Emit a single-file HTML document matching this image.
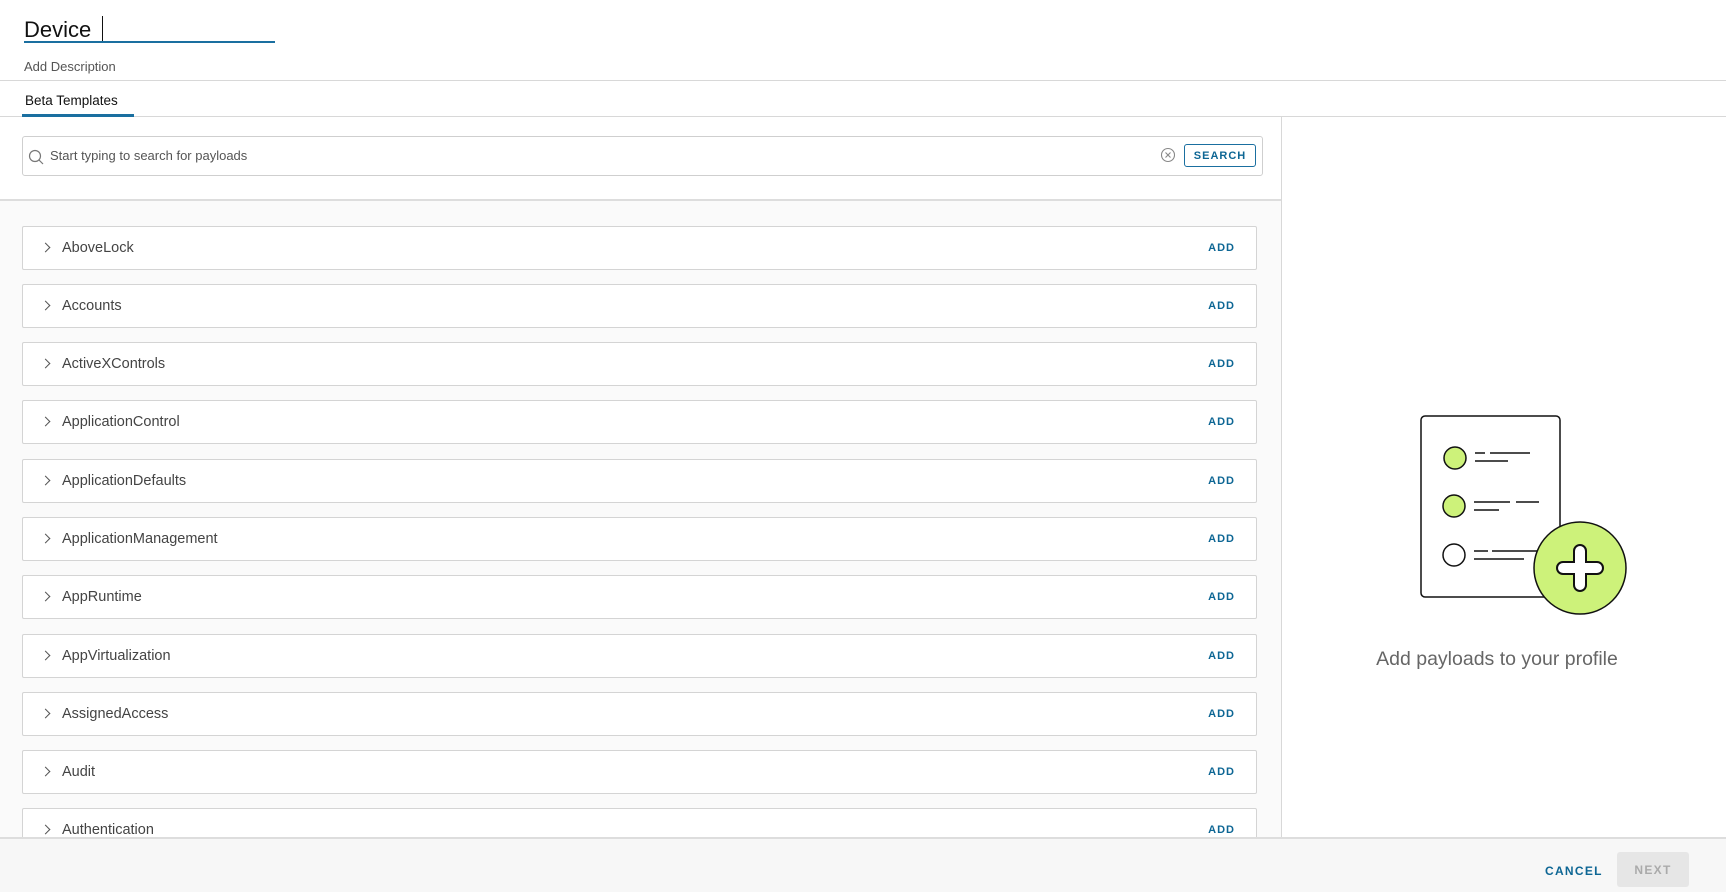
<!DOCTYPE html>
<html><head><style>
*{box-sizing:border-box;margin:0;padding:0}
body{width:1726px;height:892px;overflow:hidden;background:#fff;font-family:"Liberation Sans",sans-serif;position:relative;color:#333}
.abs{position:absolute}
.row{position:absolute;left:22px;width:1235px;height:44px;background:#fff;border:1px solid #d4d4d4;border-radius:2px}
.row .ch{position:absolute;left:19px;top:17px;width:7px;height:7px;border-right:1.5px solid #555;border-top:1.5px solid #555;transform:rotate(45deg)}
.row .t{position:absolute;left:39px;top:13px;font-size:14.5px;color:#444}
.row .a{position:absolute;right:21px;top:15px;font-size:11px;font-weight:bold;letter-spacing:1px;color:#0d6694}
</style></head><body>
<div class="abs" style="left:24px;top:17px;font-size:22px;color:#111">Device</div>
<div class="abs" style="left:102px;top:16px;width:1px;height:26px;background:#111"></div>
<div class="abs" style="left:24px;top:41px;width:251px;height:2px;background:#1a6fa0"></div>
<div class="abs" style="left:24px;top:59px;font-size:13px;color:#555">Add Description</div>
<div class="abs" style="left:0;top:80px;width:1726px;height:1px;background:#d8d8d8"></div>
<div class="abs" style="left:25px;top:93px;font-size:13.5px;color:#111">Beta Templates</div>
<div class="abs" style="left:0;top:116px;width:1726px;height:1px;background:#d8d8d8"></div>
<div class="abs" style="left:22px;top:114px;width:112px;height:3px;background:#1a6fa0"></div>
<div class="abs" style="left:1281px;top:117px;width:1px;height:721px;background:#d8d8d8"></div>
<div class="abs" style="left:22px;top:136px;width:1241px;height:40px;border:1px solid #cfcfcf;border-radius:3px"></div>
<svg class="abs" style="left:28px;top:149px" width="16" height="16"><circle cx="7" cy="7" r="5.5" fill="none" stroke="#777" stroke-width="1.2"/><path d="M11 11l4 4" stroke="#777" stroke-width="1.2"/></svg>
<div class="abs" style="left:50px;top:148px;font-size:13px;color:#555">Start typing to search for payloads</div>
<svg class="abs" style="left:1160px;top:147px" width="16" height="16"><circle cx="8" cy="8" r="6.5" fill="none" stroke="#888" stroke-width="1.1"/><path d="M5.5 5.5l5 5M10.5 5.5l-5 5" stroke="#888" stroke-width="1.1"/></svg>
<div class="abs" style="left:1184px;top:144px;width:72px;height:23px;border:1px solid #1a6fa0;border-radius:3px;font-size:11px;font-weight:bold;letter-spacing:1px;color:#0d6694;text-align:center;line-height:22px">SEARCH</div>
<div class="abs" style="left:0;top:199px;width:1281px;height:639px;background:#fafafa;border-top:2px solid #ddd"></div>
<div class="row" style="top:226px"><span class="ch"></span><span class="t">AboveLock</span><span class="a">ADD</span></div>
<div class="row" style="top:284px"><span class="ch"></span><span class="t">Accounts</span><span class="a">ADD</span></div>
<div class="row" style="top:342px"><span class="ch"></span><span class="t">ActiveXControls</span><span class="a">ADD</span></div>
<div class="row" style="top:400px"><span class="ch"></span><span class="t">ApplicationControl</span><span class="a">ADD</span></div>
<div class="row" style="top:459px"><span class="ch"></span><span class="t">ApplicationDefaults</span><span class="a">ADD</span></div>
<div class="row" style="top:517px"><span class="ch"></span><span class="t">ApplicationManagement</span><span class="a">ADD</span></div>
<div class="row" style="top:575px"><span class="ch"></span><span class="t">AppRuntime</span><span class="a">ADD</span></div>
<div class="row" style="top:634px"><span class="ch"></span><span class="t">AppVirtualization</span><span class="a">ADD</span></div>
<div class="row" style="top:692px"><span class="ch"></span><span class="t">AssignedAccess</span><span class="a">ADD</span></div>
<div class="row" style="top:750px"><span class="ch"></span><span class="t">Audit</span><span class="a">ADD</span></div>
<div class="row" style="top:808px"><span class="ch"></span><span class="t">Authentication</span><span class="a">ADD</span></div>
<svg class="abs" style="left:1410px;top:410px" width="230" height="210" fill="none" stroke="#111" stroke-width="1.5">
<rect x="11" y="6" width="139" height="181" rx="4" fill="#fff"/>
<circle cx="45" cy="48" r="11" fill="#cdf27a"/><path d="M65 43h10M80 43h40M65 51h33"/>
<circle cx="44" cy="96" r="11" fill="#cdf27a"/><path d="M64 92h36M106 92h23M64 100h25"/>
<circle cx="44" cy="145" r="11" fill="#fff"/><path d="M64 141h14M82 141h50M64 149h50"/>
<circle cx="170" cy="158" r="46" fill="#cdf27a"/>
<path d="M164 141a5 5 0 0 1 12 0v11h11a5 5 0 0 1 0 12h-11v11a5 5 0 0 1 -12 0v-11h-11a5 5 0 0 1 0 -12h11z" fill="#fff" stroke-width="2"/>
</svg>
<div class="abs" style="left:1282px;top:648px;width:430px;text-align:center;font-size:19.5px;color:#666">Add payloads to your profile</div>
<div class="abs" style="left:0;top:837px;width:1726px;height:55px;background:#f7f7f7;border-top:2px solid #ddd"></div>
<div class="abs" style="left:1545px;top:864px;font-size:12px;font-weight:bold;letter-spacing:1.3px;color:#0d6694">CANCEL</div>
<div class="abs" style="left:1617px;top:852px;width:72px;height:35px;background:#e6e6e6;border-radius:3px;font-size:12px;letter-spacing:1.3px;color:#aaa;text-align:center;line-height:36px;font-weight:bold">NEXT</div>
</body></html>
